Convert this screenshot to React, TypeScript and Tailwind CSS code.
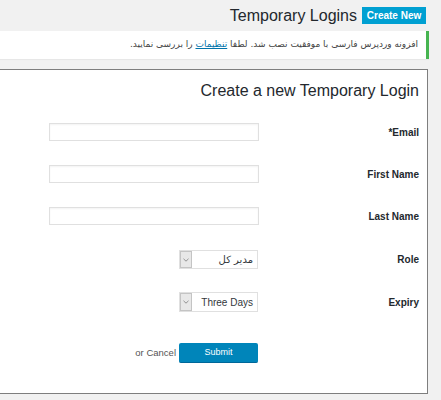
function Chevron() {
  return (
    <svg width="6" height="4" viewBox="0 0 6 4" className="block">
      <path d="M0.5 0.8 L3 3.2 L5.5 0.8" fill="none" stroke="#888" strokeWidth="0.9" />
    </svg>
  );
}

export default function App() {
  const labelCls = "w-[160px] text-right text-[10px] font-bold text-[#23282d] font-['Liberation_Sans',sans-serif]";
  const inputCls = 'w-[210px] h-[18px] border border-[#e0e0e0] bg-white shadow-[inset_0_1px_2px_rgba(0,0,0,0.05)]';

  const rows = [
    { label: '*Email', top: 'mt-[21px]' },
    { label: 'First Name', top: 'mt-[24px]' },
    { label: 'Last Name', top: 'mt-[24px]' },
  ];

  return (
    <div className="min-h-[400px] w-[441px] bg-[#f1f1f1] font-['Liberation_Sans',sans-serif] overflow-hidden">
      {/* page heading */}
      <div className="flex items-center justify-end pt-[7px] pr-[15px]">
        <h1 className="text-[16px] leading-[17px] text-[#23282d]">Temporary Logins</h1>
        <button className="ml-[5px] h-[17px] w-[64px] bg-[#00a0d2] text-white text-[10px] leading-[17px] font-bold">
          Create New
        </button>
      </div>

      {/* notice */}
      <div className="mt-[7px] w-[429px] h-[28px] bg-white border-r-[3px] border-[#46b450] flex items-center justify-end pr-[8px] shadow-[0_1px_1px_rgba(0,0,0,0.04)]">
        <p dir="rtl" className="text-[9px] text-[#444] font-['DejaVu_Sans',sans-serif]">
          افزونه وردپرس فارسی با موفقیت نصب شد. لطفا{' '}
          <a className="text-[#0073aa] underline">تنظیمات</a> را بررسی نمایید.
        </p>
      </div>

      {/* card */}
      <div className="mt-[10px] w-[428px] h-[325px] bg-white border border-[#7e7e7e] border-l-0 pr-[8px]">
        <h2 className="text-right text-[16px] leading-[22px] text-[#23282d] mt-[10px]">Create a new Temporary Login</h2>

        {rows.map((r) => (
          <div key={r.label} className={`flex items-center justify-end ${r.top}`}>
            <div className={inputCls} />
            <div className={labelCls}>{r.label}</div>
          </div>
        ))}

        <div className="flex items-center justify-end mt-[25px]">
          <div className="w-[210px] flex justify-end">
            <div className="w-[79px] h-[19px] border border-[#e0e0e0] bg-white flex items-stretch mr-[1px]">
              <div className="w-[12px] bg-[#e8e8e8] border border-[#c4c4c4] flex items-center justify-center">
                <Chevron />
              </div>
              <div dir="rtl" className="flex-1 pr-[4px] flex items-center text-[10px] text-[#32373c] font-['DejaVu_Sans',sans-serif]">مدیر کل</div>
            </div>
          </div>
          <div className={labelCls}>Role</div>
        </div>

        <div className="flex items-center justify-end mt-[23px]">
          <div className="w-[210px] flex justify-end">
            <div className="w-[79px] h-[20px] border border-[#e0e0e0] bg-white flex items-stretch mr-[1px]">
              <div className="w-[12px] bg-[#e8e8e8] border border-[#c4c4c4] flex items-center justify-center">
                <Chevron />
              </div>
              <div className="flex-1 pr-[4px] flex items-center justify-end text-[10px] text-[#32373c]">Three Days</div>
            </div>
          </div>
          <div className={labelCls}>Expiry</div>
        </div>

        <div className="flex items-center justify-end mt-[31px]">
          <span className="text-[9.5px] text-[#555] mr-[3px]">or Cancel</span>
          <button className="w-[79px] h-[20px] mr-[1px] bg-[#0085ba] rounded-[2px] text-white text-[9px] border-b border-[#006799]">
            Submit
          </button>
          <div className="w-[160px]" />
        </div>
      </div>
    </div>
  );
}
